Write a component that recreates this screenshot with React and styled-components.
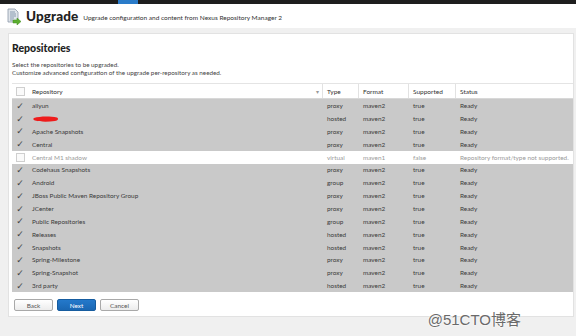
import React from 'react'
import styled, {createGlobalStyle} from 'styled-components'

const GlobalStyle = createGlobalStyle`
  html, body {
    margin: 0;
    padding: 0;
    width: 576px;
    height: 336px;
    overflow: hidden;
    background: #f0f0f0;
    font-family: Lato, "Open Sans", "Liberation Sans", sans-serif;
  }
`

const repos = [
  {name: 'aliyun', type: 'proxy', format: 'maven2', supported: 'true', status: 'Ready'},
  {name: '', hidden: true, type: 'hosted', format: 'maven2', supported: 'true', status: 'Ready'},
  {name: 'Apache Snapshots', type: 'proxy', format: 'maven2', supported: 'true', status: 'Ready'},
  {name: 'Central', type: 'proxy', format: 'maven2', supported: 'true', status: 'Ready'},
  {name: 'Central M1 shadow', type: 'virtual', format: 'maven1', supported: 'false', status: 'Repository format/type not supported.', disabled: true},
  {name: 'Codehaus Snapshots', type: 'proxy', format: 'maven2', supported: 'true', status: 'Ready'},
  {name: 'Android', type: 'group', format: 'maven2', supported: 'true', status: 'Ready'},
  {name: 'JBoss Public Maven Repository Group', type: 'proxy', format: 'maven2', supported: 'true', status: 'Ready'},
  {name: 'JCenter', type: 'proxy', format: 'maven2', supported: 'true', status: 'Ready'},
  {name: 'Public Repositories', type: 'group', format: 'maven2', supported: 'true', status: 'Ready'},
  {name: 'Releases', type: 'hosted', format: 'maven2', supported: 'true', status: 'Ready'},
  {name: 'Snapshots', type: 'hosted', format: 'maven2', supported: 'true', status: 'Ready'},
  {name: 'Spring-Milestone', type: 'proxy', format: 'maven2', supported: 'true', status: 'Ready'},
  {name: 'Spring-Snapshot', type: 'proxy', format: 'maven2', supported: 'true', status: 'Ready'},
  {name: '3rd party', type: 'hosted', format: 'maven2', supported: 'true', status: 'Ready'},
]

function UpgradeIcon() {
  return (
    <svg width="14" height="17" viewBox="0 0 14 17">
      <path d="M1 1h7l3 3v10H1z" fill="#dfe4ea" stroke="#8a98a8" strokeWidth="0.8" />
      <path d="M3 4h5M3 6h6M3 8h6M3 10h4M3 12h3" stroke="#7f93aa" strokeWidth="0.9" />
      <path d="M6 12h4v-2l4 3.5-4 3.5v-2H6z" fill="#5cae2f" stroke="#3e8a1c" strokeWidth="0.5" />
    </svg>
  )
}

function Scribble() {
  return (
    <svg width="28" height="8" viewBox="0 0 28 8">
      <path d="M2 3c6-2 16-2 23-0.5c2 1 1 3-2 3.5c-7 1-15 1-20-0.5c-2-0.6-2-2 -1-2.5z" fill="#ee1c1c" />
    </svg>
  )
}

function App() {
  return (
    <>
      <GlobalStyle />
      <Page>
        <TopBar><TopTab /></TopBar>
        <Header>
          <UpgradeIcon />
          <Title>Upgrade</Title>
          <Subtitle>Upgrade configuration and content from Nexus Repository Manager 2</Subtitle>
        </Header>
        <Main>
          <Panel>
            <PanelTitle>Repositories</PanelTitle>
            <Description>
              Select the repositories to be upgraded.<br />
              Customize advanced configuration of the upgrade per-repository as needed.
            </Description>
            <Table>
              <HeadRow>
                <HeadCell center><Box /></HeadCell>
                <HeadCell divider>Repository<Arrow>▾</Arrow></HeadCell>
                <HeadCell divider>Type</HeadCell>
                <HeadCell divider>Format</HeadCell>
                <HeadCell divider>Supported</HeadCell>
                <HeadCell>Status</HeadCell>
              </HeadRow>
              {repos.map((repo, i) => (
                <Row key={i} $disabled={repo.disabled}>
                  <Cell center>{repo.disabled ? <Box /> : <Check>✓</Check>}</Cell>
                  <Cell>{repo.hidden ? <Scribble /> : repo.name}</Cell>
                  <Cell>{repo.type}</Cell>
                  <Cell>{repo.format}</Cell>
                  <Cell>{repo.supported}</Cell>
                  <Cell>{repo.status}</Cell>
                </Row>
              ))}
            </Table>
            <Buttons>
              <Button>Back</Button>
              <Button primary>Next</Button>
              <Button>Cancel</Button>
            </Buttons>
          </Panel>
          <Watermark>@51CTO博客</Watermark>
        </Main>
      </Page>
    </>
  )
}

const Page = styled.div`
  width: 576px;
  height: 336px;
  display: flex;
  flex-direction: column;
  background: #f0f0f0;
  color: #333;
`

const TopBar = styled.div`
  height: 4px;
  background: #1e1e1e;
  display: flex;
`

const TopTab = styled.div`
  margin-left: 118px;
  width: 20px;
  background: #2a7bc9;
`

const Header = styled.div`
  height: 27px;
  background: white;
  display: flex;
  align-items: center;
  padding-left: 7px;
  gap: 5px;
`

const Title = styled.h1`
  margin: 0;
  font-size: 13.5px;
  font-weight: 900;
  color: #222;
  letter-spacing: 0.1px;
`

const Subtitle = styled.span`
  font-size: 6.5px;
  color: #333;
  margin-top: 3px;
`

const Main = styled.div`
  position: relative;
  flex: 1;
  padding: 5px 2px 19px 8px;
`

const Panel = styled.div`
  background: white;
  border: 1px solid #e2e2e2;
  padding: 6px 0 5px 3px;
`

const PanelTitle = styled.h2`
  margin: 0;
  font-size: 10.5px;
  font-weight: 900;
  color: #222;
  line-height: 16px;
`

const Description = styled.p`
  margin: 5px 0 6px;
  font-size: 6.3px;
  line-height: 8px;
  color: #444;
`

const Table = styled.div`
  display: flex;
  flex-direction: column;
`

const columns = '16px 295px 36px 50px 47px 1fr'

const HeadRow = styled.div`
  display: grid;
  grid-template-columns: ${columns};
  height: 14px;
  border-top: 1px solid #e4e4e4;
  border-bottom: 1px solid #d8d8d8;
  background: white;
`

const HeadCell = styled.div`
  display: flex;
  align-items: center;
  justify-content: ${p => p.center ? 'center' : 'flex-start'};
  padding-left: ${p => p.center ? 0 : 4}px;
  font-size: 6.5px;
  color: #333;
  border-right: ${p => p.divider ? '1px solid #e2e2e2' : 'none'};
`

const Arrow = styled.span`
  margin-left: auto;
  margin-right: 3px;
  color: #999;
  font-size: 6px;
`

const Row = styled.div`
  display: grid;
  grid-template-columns: ${columns};
  height: 12.85px;
  background: ${p => p.$disabled ? 'white' : '#c9c9c9'};
  color: ${p => p.$disabled ? '#9a9a9a' : '#3a3a3a'};
`

const Cell = styled.div`
  display: flex;
  align-items: center;
  justify-content: ${p => p.center ? 'center' : 'flex-start'};
  padding-left: ${p => p.center ? 0 : 4}px;
  font-size: 6.4px;
  white-space: nowrap;
  overflow: hidden;
`

const Box = styled.span`
  width: 7px;
  height: 7px;
  border: 1px solid #cfcfcf;
  background: #fafafa;
`

const Check = styled.span`
  font-size: 9px;
  color: #444;
  font-family: "DejaVu Sans", sans-serif;
`

const Buttons = styled.div`
  display: flex;
  gap: 4px;
  margin-top: 7px;
  padding-left: 2px;
`

const Button = styled.button`
  width: 39px;
  height: 12px;
  padding: 0;
  border-radius: 2px;
  font-family: inherit;
  font-size: 6.4px;
  border: 1px solid ${p => p.primary ? '#165c9f' : '#a9a9a9'};
  background: ${p => p.primary ? 'linear-gradient(#2479cb, #1a67b3)' : 'linear-gradient(#ffffff, #ececec)'};
  color: ${p => p.primary ? 'white' : '#555'};
`

const Watermark = styled.div`
  position: absolute;
  right: 55px;
  bottom: 7px;
  font-family: "Liberation Sans", "Noto Sans CJK SC", sans-serif;
  font-size: 15px;
  color: #6a6a6a;
  text-shadow: 0 0 2px white, 0 0 2px white;
`

export default App
